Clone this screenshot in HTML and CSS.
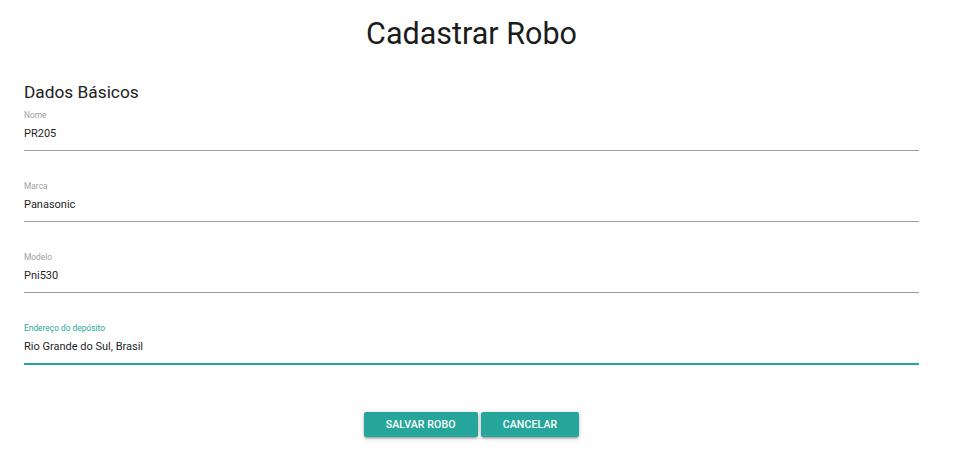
FILE: index.html
```html
<!DOCTYPE html>
<html lang="pt-BR">
<head>
<meta charset="utf-8">
<title>Cadastrar Robo</title>
<link rel="stylesheet" href="styles.css">
</head>
<body>
<main class="page">
  <h1 class="title">Cadastrar Robo</h1>
  <form class="form">
    <h2 class="section">Dados Básicos</h2>
    <div class="field">
      <label class="label">Nome</label>
      <div class="value">PR205</div>
    </div>
    <div class="field">
      <label class="label">Marca</label>
      <div class="value">Panasonic</div>
    </div>
    <div class="field">
      <label class="label">Modelo</label>
      <div class="value">Pni530</div>
    </div>
    <div class="field field-active">
      <label class="label">Endereço do depósito</label>
      <div class="value">Rio Grande do Sul, Brasil</div>
    </div>
    <div class="actions">
      <button type="button" class="btn">Salvar Robo</button>
      <button type="button" class="btn">Cancelar</button>
    </div>
  </form>
</main>
</body>
</html>
```
FILE: styles.css
```css
* { box-sizing: border-box; }
html, body { margin: 0; padding: 0; background: #fff; }
body {
  font-family: Roboto, "Liberation Sans", Arial, sans-serif;
  color: rgba(0,0,0,0.87);
}
.page {
  width: 895px;
  height: 456px;
  margin-left: 24px;
  padding-top: 16px;
}
.title {
  margin: 0;
  text-align: center;
  font-size: 30.5px;
  line-height: 36px;
  font-weight: 400;
  color: #1c1c1c;
}
.form {
  margin-top: 28px;
  display: flex;
  flex-direction: column;
}
.section {
  margin: 0 0 4px 0;
  font-size: 17.3px;
  line-height: 24px;
  font-weight: 400;
  color: #222;
}
.field {
  display: flex;
  flex-direction: column;
  padding-bottom: 5px;
  border-bottom: 1px solid #9e9e9e;
  margin-bottom: 28px;
}
.label {
  font-size: 8.4px;
  line-height: 14px;
  color: #9e9e9e;
}
.value {
  margin-top: 1px;
  font-size: 11px;
  line-height: 22px;
  color: #1f1f1f;
}
.field-active {
  border-bottom-color: #26a69a;
  box-shadow: 0 1px 0 0 #26a69a;
}
.field-active .label { color: #26a69a; }
.actions {
  margin-top: 20px;
  display: flex;
  justify-content: center;
  gap: 3px;
}
.btn {
  height: 25px;
  padding: 0 22px;
  border: none;
  border-radius: 2px;
  background: #26a69a;
  color: #fff;
  font-family: Roboto, "Liberation Sans", Arial, sans-serif;
  font-size: 10.6px;
  font-weight: 500;
  text-transform: uppercase;
  letter-spacing: 0.1px;
  box-shadow: 0 2px 2px 0 rgba(0,0,0,0.14), 0 3px 1px -2px rgba(0,0,0,0.12), 0 1px 5px 0 rgba(0,0,0,0.2);
}
```
